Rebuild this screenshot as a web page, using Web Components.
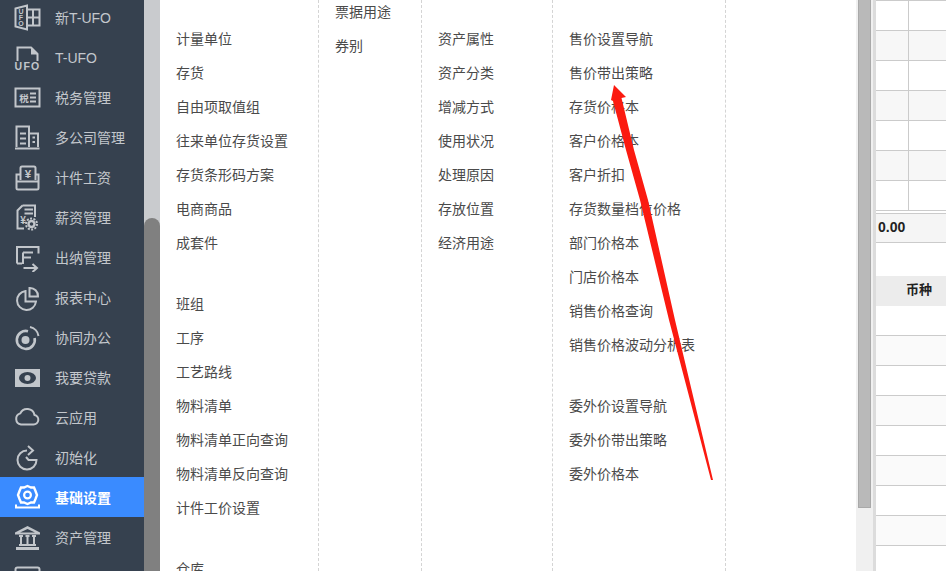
<!DOCTYPE html>
<html lang="zh">
<head>
<meta charset="utf-8">
<title>基础设置</title>
<style>
	html, body { margin: 0; height: 100%; overflow: hidden; background: #fff; }
	body { font: 14px "Liberation Sans", "Noto Sans CJK SC", sans-serif; }
</style>
</head>
<body>
<app-shell>
	<side-nav slot="nav">
		<nav-item icon="book">新T-UFO</nav-item>
		<nav-item icon="ufo">T-UFO</nav-item>
		<nav-item icon="tax">税务管理</nav-item>
		<nav-item icon="company">多公司管理</nav-item>
		<nav-item icon="piece">计件工资</nav-item>
		<nav-item icon="salary">薪资管理</nav-item>
		<nav-item icon="cashier">出纳管理</nav-item>
		<nav-item icon="pie">报表中心</nav-item>
		<nav-item icon="collab">协同办公</nav-item>
		<nav-item icon="money">我要贷款</nav-item>
		<nav-item icon="cloud">云应用</nav-item>
		<nav-item icon="init">初始化</nav-item>
		<nav-item icon="base" active>基础设置</nav-item>
		<nav-item icon="bank">资产管理</nav-item>
		<nav-item icon="screen"></nav-item>
	</side-nav>
	<menu-panel slot="menu">
		<menu-column width="159" top="22">
			<menu-group>
				<menu-link>计量单位</menu-link><menu-link>存货</menu-link><menu-link>自由项取值组</menu-link>
				<menu-link>往来单位存货设置</menu-link><menu-link>存货条形码方案</menu-link><menu-link>电商商品</menu-link><menu-link>成套件</menu-link>
			</menu-group>
			<menu-group>
				<menu-link>班组</menu-link><menu-link>工序</menu-link><menu-link>工艺路线</menu-link><menu-link>物料清单</menu-link>
				<menu-link>物料清单正向查询</menu-link><menu-link>物料清单反向查询</menu-link><menu-link>计件工价设置</menu-link>
			</menu-group>
			<menu-group><menu-link>仓库</menu-link></menu-group>
		</menu-column>
		<menu-column width="103" top="-5">
			<menu-group><menu-link>票据用途</menu-link><menu-link>券别</menu-link></menu-group>
		</menu-column>
		<menu-column width="131" top="22">
			<menu-group>
				<menu-link>资产属性</menu-link><menu-link>资产分类</menu-link><menu-link>增减方式</menu-link><menu-link>使用状况</menu-link>
				<menu-link>处理原因</menu-link><menu-link>存放位置</menu-link><menu-link>经济用途</menu-link>
			</menu-group>
		</menu-column>
		<menu-column width="173" top="22">
			<menu-group>
				<menu-link>售价设置导航</menu-link><menu-link>售价带出策略</menu-link><menu-link>存货价格本</menu-link><menu-link>客户价格本</menu-link><menu-link>客户折扣</menu-link>
				<menu-link>存货数量档位价格</menu-link><menu-link>部门价格本</menu-link><menu-link>门店价格本</menu-link><menu-link>销售价格查询</menu-link><menu-link>销售价格波动分析表</menu-link>
			</menu-group>
			<menu-group>
				<menu-link>委外价设置导航</menu-link><menu-link>委外价带出策略</menu-link><menu-link>委外价格本</menu-link>
			</menu-group>
		</menu-column>
	</menu-panel>
	<data-grid slot="grid"></data-grid>
	<red-arrow slot="overlay"></red-arrow>
</app-shell>

<script>
// Общая заготовка: тень + шаблон
function tpl(html) {
	const t = document.createElement('template');
	t.innerHTML = html;
	return t;
}

class AppShell extends HTMLElement {
	constructor() {
		super();
		this.attachShadow({ mode: 'open' }).append(AppShell.template.content.cloneNode(true));
	}
}
AppShell.template = tpl(`
	<style>
		:host { display: flex; position: relative; height: 571px; overflow: hidden; }
		.bar { flex: none; width: 16px; background: #c9cbce; display: flex; flex-direction: column; }
		.bar i { margin-top: 218px; flex: 1; background: #808080; border-radius: 8px 8px 0 0; }
		.main { flex: 1; min-width: 0; display: flex; }
		.vbar { flex: none; width: 13px; padding: 0 2px; background: #f0f0f0; }
		.vbar i { display: block; height: 508px; box-sizing: border-box; background: #b9b9b9; border: 1px solid #a9a9a9; border-top: 0; }
		.split { flex: none; width: 3px; background: #dcdcdc; }
	</style>
	<slot name="nav"></slot>
	<div class="bar"><i></i></div>
	<div class="main"><slot name="menu"></slot></div>
	<div class="vbar"><i></i></div>
	<div class="split"></div>
	<slot name="grid"></slot>
	<slot name="overlay"></slot>
`);

class SideNav extends HTMLElement {
	constructor() {
		super();
		this.attachShadow({ mode: 'open' }).append(SideNav.template.content.cloneNode(true));
	}
}
SideNav.template = tpl(`
	<style>
		:host { display: block; flex: none; width: 144px; background: #36414f; overflow: hidden; }
		div { margin-top: -3px; }
	</style>
	<div><slot></slot></div>
`);

// Иконки навигации, сетка 28x28
const NAV_ICONS = {
	book: `<path d="M1.5 4.5L13 1.5V25.5L1.5 22.5Z"/><path d="M13 5.5H25.5V21.5H13M19 5.5V21.5M13 13.5H25.5"/>
		<g class="t" font-size="7" text-anchor="middle"><text x="7" y="9.5">U</text><text x="7" y="15.5">F</text><text x="7" y="21.5">O</text></g>`,
	ufo: `<path d="M3.5 17V3.5H17L23.5 10V17"/><path class="f" d="M17 3.5H18L24 9.5V10.5H17Z"/>
		<text class="l" x="13.5" y="26" font-size="10.5" letter-spacing="1.2" text-anchor="middle">UFO</text>`,
	tax: `<rect x="1.5" y="4.5" width="24" height="18"/><text class="l" x="10" y="17.5" font-size="9.5" text-anchor="middle">税</text><path d="M16 9.5H22M16 13.5H22M16 17.5H22"/>`,
	company: `<path d="M2.5 23V2.5H15V23M15 9.5H24V23M1 24.5H25.5"/><path d="M6 9.5H12M6 14.5H12M6 19.5H12M18.5 13.5H21M18.5 18H21"/>`,
	piece: `<path d="M6.5 16V4A1.5 1.5 0 0 1 8 2.5H20A1.5 1.5 0 0 1 21.5 4V16"/><path d="M6.5 10.5H2.5V24A1.5 1.5 0 0 0 4 25.5H23A1.5 1.5 0 0 0 24.5 24V10.5H21.5M2.5 17.5H24.5"/>
		<text class="l" x="14" y="14" font-size="11.5" text-anchor="middle">¥</text>`,
	salary: `<path d="M8.5 1.5H21V13M8.5 1.5L3.5 6.5V24.5H10"/><path d="M10.5 5.5H19M10.5 9.5H19"/>
		<text class="l" x="9" y="20" font-size="10" text-anchor="middle">¥</text><circle cx="17.5" cy="20" r="3" stroke-width="2.4"/><circle cx="17.5" cy="20" r="5.5" stroke-width="2" stroke-dasharray="2 1.4"/>`,
	cashier: `<path d="M3 19.5V3H24.5V9.5M3 19.5H8"/><path d="M9 8.5H19M9 13.5H17M9 8.5V20"/><path d="M9.5 24H22.5M18.5 20L23 24L18.5 28"/>`,
	pie: `<path d="M11.5 7A9.5 9.5 0 1 0 22 17.5H11.5Z"/><path d="M15.5 4A8 8 0 0 1 24 12.5H15.5Z"/>`,
	collab: `<path stroke-width="2.6" d="M14 7.2A9 9 0 1 0 20.6 14"/><circle cx="11.5" cy="16" r="4" class="f"/><path d="M16 3A10.5 10.5 0 0 1 24.5 12"/>`,
	money: `<rect class="f" x="1" y="5" width="25" height="18"/><ellipse cx="13.5" cy="14" rx="8.5" ry="6" fill="#36414f" stroke="none"/><circle class="f" cx="13.5" cy="14" r="3"/>`,
	cloud: `<path d="M7 20.5H19.5A4.8 4.8 0 0 0 20.5 11A7.5 7.5 0 0 0 6.3 9.4A5.7 5.7 0 0 0 7 20.5Z"/>`,
	init: `<path d="M13 6.5A9.5 9.5 0 1 0 22.5 16H14.5L12 13"/><path d="M14 2L19 6.5L14 11"/>`,
	base: `<path stroke-width="2.4" d="M13.5 2L17 3.5H20L21.5 7L23 11L21.5 15L20 18.5H17L13.5 20L10 18.5H7L5.5 15L4 11L5.5 7L7 3.5H10Z"/><circle cx="13.5" cy="11" r="3.4" stroke-width="2.2"/><path d="M2 20.5V23.5H25V20.5"/>`,
	bank: `<path class="f" d="M13.5 2L26 8.5V10.5H1V8.5ZM2 23H25V26H2Z"/><path fill="#36414f" stroke="none" d="M13.5 5L6 8.5H21Z"/><path d="M5 12H9M11.5 12H15.5M18 12H22M7 12V21M13.5 12V21M20 12V21M5 21H22"/>`,
	screen: `<rect x="1.5" y="3.5" width="24" height="18" rx="2"/>`
};

class NavItem extends HTMLElement {
	constructor() {
		super();
		this.attachShadow({ mode: 'open' }).append(NavItem.template.content.cloneNode(true));
	}
	connectedCallback() {
		this.shadowRoot.querySelector('svg').innerHTML = NAV_ICONS[this.getAttribute('icon')] || '';
	}
}
NavItem.template = tpl(`
	<style>
		:host { display: flex; align-items: center; height: 40px; padding-left: 14px; gap: 13px; color: #c3c7cc; --ico: #c2c6cb; }
		:host([active]) { background: #3a8bff; color: #fff; font-weight: bold; --ico: #fff; }
		svg { flex: none; width: 28px; height: 28px; margin-top: 1px; fill: none; stroke: var(--ico); stroke-width: 2; }
		svg .f { fill: var(--ico); stroke: none; }
		svg text { font-family: "Liberation Sans", "Noto Sans CJK SC", sans-serif; font-weight: bold; stroke: none; }
		svg .l { fill: var(--ico); }
		svg .t { fill: var(--ico); }
		span { line-height: 20px; padding-top: 2px; white-space: nowrap; }
	</style>
	<svg viewBox="0 0 28 28" aria-hidden="true"></svg>
	<span><slot></slot></span>
`);

class MenuPanel extends HTMLElement {
	constructor() {
		super();
		this.attachShadow({ mode: 'open' }).append(MenuPanel.template.content.cloneNode(true));
	}
}
MenuPanel.template = tpl(`
	<style>
		:host { display: flex; height: 571px; overflow: hidden; flex: 1; color: #4a4a4a; }
	</style>
	<slot></slot>
`);

class MenuColumn extends HTMLElement {
	constructor() {
		super();
		this.attachShadow({ mode: 'open' }).append(MenuColumn.template.content.cloneNode(true));
	}
	connectedCallback() {
		this.style.width = this.getAttribute('width') + 'px';
		this.shadowRoot.querySelector('div').style.marginTop = this.getAttribute('top') + 'px';
	}
}
MenuColumn.template = tpl(`
	<style>
		:host { display: block; flex: none; box-sizing: border-box; padding-left: 16px; border-right: 1px dashed #d4d4d4; }
	</style>
	<div><slot></slot></div>
`);

class MenuGroup extends HTMLElement {
	constructor() {
		super();
		this.attachShadow({ mode: 'open' }).innerHTML = `
			<style>
				:host { display: block; margin-bottom: 27px; }
			</style>
			<slot></slot>`;
	}
}

class MenuLink extends HTMLElement {
	constructor() {
		super();
		this.attachShadow({ mode: 'open' }).innerHTML = `
			<style>
				:host { display: block; height: 34px; line-height: 34px; white-space: nowrap; }
			</style>
			<slot></slot>`;
	}
}

class DataGrid extends HTMLElement {
	constructor() {
		super();
		let top = '';
		// верхняя таблица, семь строк по 30px
		for (let i = 0; i < 7; i++) top += `<div class="row ${i % 2 ? 'alt' : ''}"><b></b><b></b></div>`;
		let bottom = '';
		for (let i = 0; i < 9; i++) bottom += `<div class="row plain ${i % 2 ? 'soft' : ''}"></div>`;
		this.attachShadow({ mode: 'open' }).innerHTML = `
			<style>
				:host { display: block; flex: none; width: 70px; height: 571px; overflow: hidden; color: #222; font-size: 13px; }
				.row { box-sizing: border-box; height: 30px; display: grid; grid-template-columns: 33px 1fr; border-bottom: 1px solid #cbcbcb; }
				.row b { display: block; }
				.row b:first-child { border-right: 1px solid #cbcbcb; }
				.head { height: 1px; background: #cbcbcb; }
				.alt { background: #f7f7f7; }
				.soft { background: #fafafa; }
				.gap { height: 3px; box-sizing: border-box; border-bottom: 1px solid #cbcbcb; }
				.sum { box-sizing: border-box; height: 29px; line-height: 26px; padding-left: 2px; background: #f5f5f5; border-bottom: 1px solid #cbcbcb; font-size: 14px; font-weight: bold; }
				.blank { height: 33px; }
				.title { box-sizing: border-box; height: 30px; line-height: 28px; padding-left: 30px; background: #ececec; font-weight: bold; }
			</style>
			<div class="head"></div>
			${top}
			<div class="gap"></div>
			<div class="sum">0.00</div>
			<div class="blank"></div>
			<div class="title">币种</div>
			${bottom}`;
	}
}

// Красная стрелка-пометка поверх скриншота
class RedArrow extends HTMLElement {
	constructor() {
		super();
		this.attachShadow({ mode: 'open' }).innerHTML = `
			<style>
				:host { position: absolute; left: 0; top: 0; display: block; pointer-events: none; }
				svg { display: block; }
			</style>
			<svg width="946" height="571" viewBox="0 0 946 571" aria-hidden="true">
				<path fill="#fb1a10" d="M614 85L626 97L621.5 98L634 150L648 200L675 320L713 480H711L669 320L640 200L626 150L613 101L611 100Z"/>
			</svg>`;
	}
}

customElements.define('app-shell', AppShell);
customElements.define('side-nav', SideNav);
customElements.define('nav-item', NavItem);
customElements.define('menu-panel', MenuPanel);
customElements.define('menu-column', MenuColumn);
customElements.define('menu-group', MenuGroup);
customElements.define('menu-link', MenuLink);
customElements.define('data-grid', DataGrid);
customElements.define('red-arrow', RedArrow);
</script>
</body>
</html>
